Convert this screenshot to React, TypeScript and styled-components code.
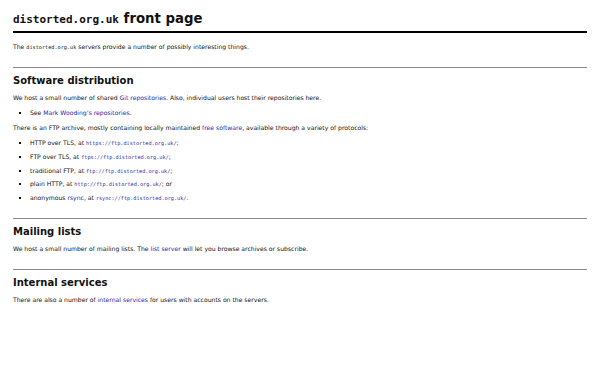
import styled, {createGlobalStyle} from 'styled-components'

const GlobalStyle = createGlobalStyle`
  html, body {
    margin: 0;
    padding: 0;
    background: #fff;
  }
  body {
    font-family: "DejaVu Sans", Verdana, sans-serif;
    font-size: 6.1px;
    color: #111;
  }
`

export const Page = styled.div`
  padding: 11px 13px 20px;
`
export const Title = styled.h1`
  margin: 0;
  padding: 0 0 3px;
  line-height: 16px;
  font-size: 13.3px;
  font-weight: bold;
  border-bottom: 2px solid #000;
`
export const Code = styled.code<{$size?: number}>`
  font-family: "DejaVu Sans Mono", monospace;
  font-size: ${p => p.$size ?? 5.2}px;
`
export const Section = styled.section`
  display: flex;
  flex-direction: column;
  gap: 7px;
  border-top: 1px solid #888;
  margin-top: 16px;
  padding-top: 6px;
`
export const Heading = styled.h2`
  margin: 0;
  line-height: 13px;
  font-size: 10px;
  font-weight: bold;
`
export const Para = styled.p`
  margin: 0;
  line-height: 8px;
`
export const Intro = styled(Para)`
  margin: 10px 0 2px;
`
export const List = styled.ul`
  margin: 0;
  padding-left: 17px;
  list-style: square;
`
export const Item = styled.li`
  line-height: 8px;
  & + & {
    margin-top: 5.8px;
  }
`
export const Link = styled.a`
  color: #2a2aa8;
  text-decoration: none;
`

const mirrors = [
  {label: 'HTTP over TLS', url: 'https://ftp.distorted.org.uk/', tail: ';'},
  {label: 'FTP over TLS', url: 'ftps://ftp.distorted.org.uk/', tail: ';'},
  {label: 'traditional FTP', url: 'ftp://ftp.distorted.org.uk/', tail: ';'},
  {label: 'plain HTTP', url: 'http://ftp.distorted.org.uk/', tail: '; or'},
]

export default function App() {
  return (
    <>
      <GlobalStyle />
      <Page>
        <Title>
          <Code $size={11}>distorted.org.uk</Code> front page
        </Title>
        <Intro>
          The <Code>distorted.org.uk</Code> servers provide a number of possibly interesting things.
        </Intro>

        <Section>
          <Heading>Software distribution</Heading>
          <Para>
            We host a small number of shared <Link href="#">Git repositories</Link>. Also, individual
            users host their repositories here.
          </Para>
          <List>
            <Item>
              See <Link href="#">Mark Wooding’s repositories</Link>.
            </Item>
          </List>
          <Para>
            There is an FTP archive, mostly containing locally maintained <Link href="#">free software</Link>,
            available through a variety of protocols:
          </Para>
          <List>
            {mirrors.map(m => (
              <Item key={m.url}>
                {m.label}, at <Link href="#"><Code>{m.url}</Code></Link>{m.tail}
              </Item>
            ))}
            <Item>
              anonymous <Link href="#">rsync</Link>, at{' '}
              <Link href="#"><Code>rsync://ftp.distorted.org.uk/</Code></Link>.
            </Item>
          </List>
        </Section>

        <Section>
          <Heading>Mailing lists</Heading>
          <Para>
            We host a small number of mailing lists. The <Link href="#">list server</Link> will let you
            browse archives or subscribe.
          </Para>
        </Section>

        <Section>
          <Heading>Internal services</Heading>
          <Para>
            There are also a number of <Link href="#">internal services</Link> for users with accounts on
            the servers.
          </Para>
        </Section>
      </Page>
    </>
  )
}
